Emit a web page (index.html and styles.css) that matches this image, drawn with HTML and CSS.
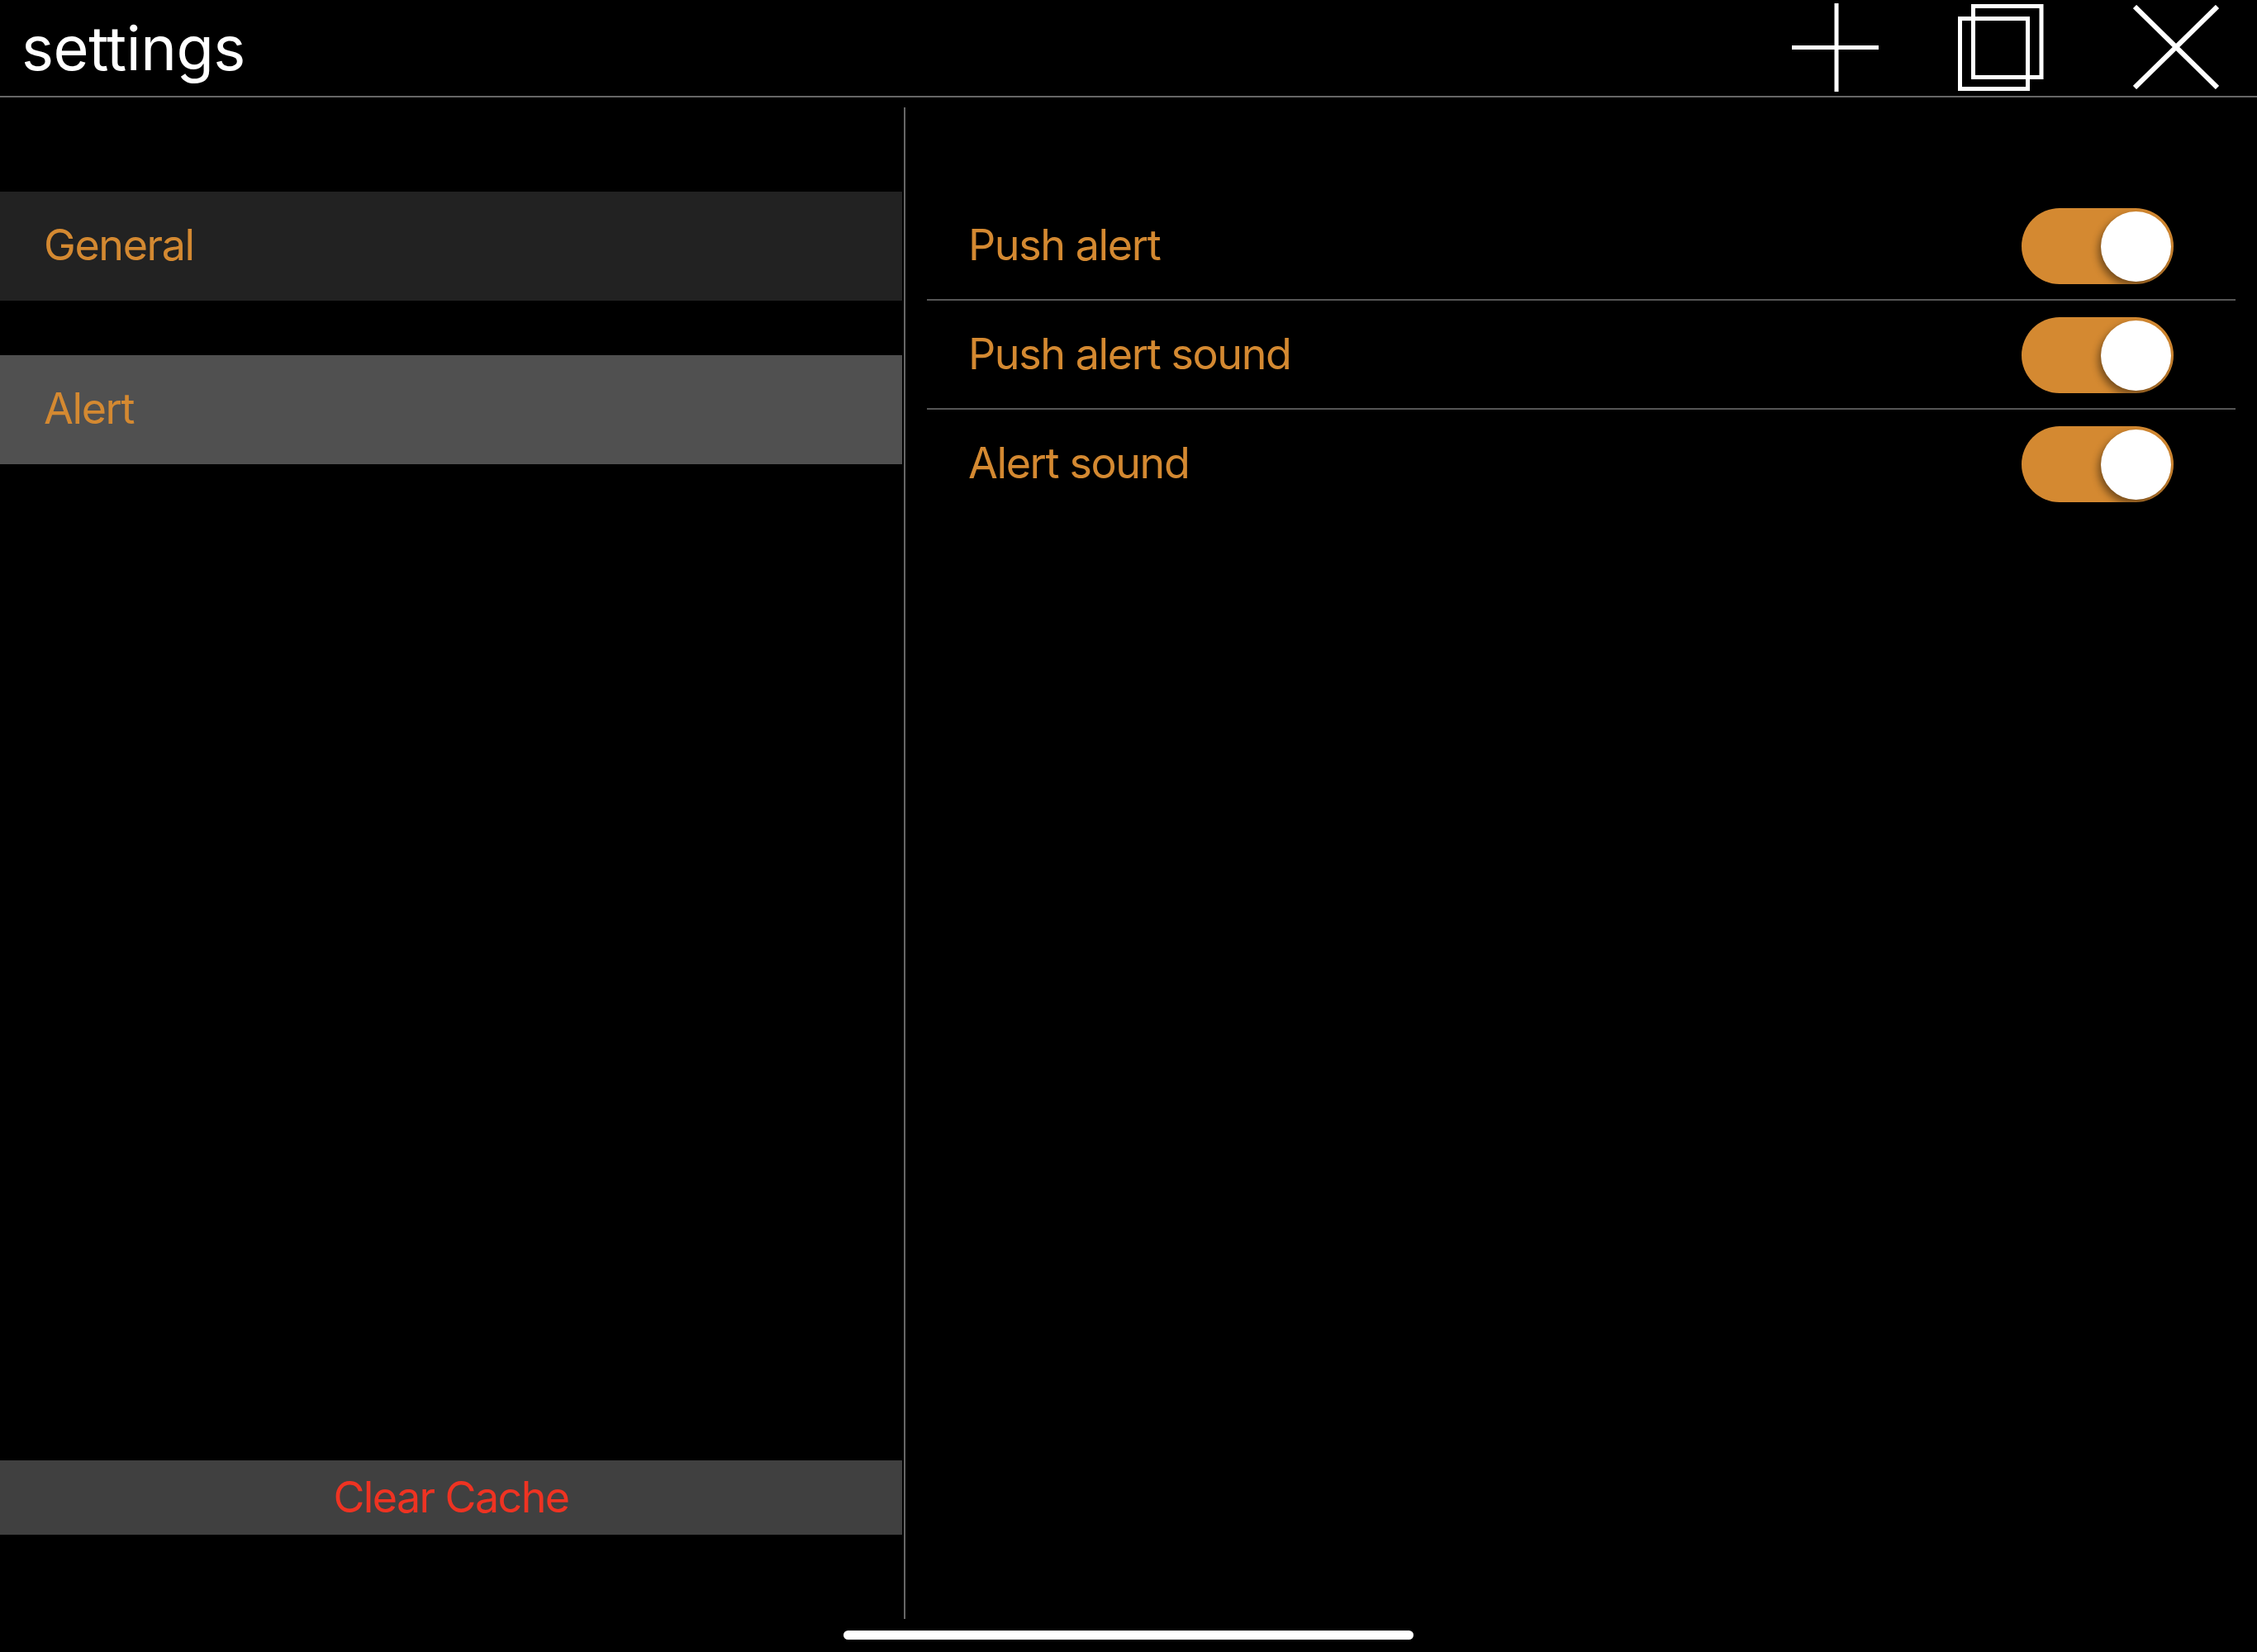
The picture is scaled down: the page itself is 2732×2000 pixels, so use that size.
FILE: index.html
```html
<!DOCTYPE html>
<html lang="en">
<head>
<meta charset="utf-8">
<title>settings</title>
<link rel="stylesheet" href="styles.css">
</head>
<body>
<div class="app">
  <header class="topbar">
    <h1 class="title">settings</h1>
    <div class="tools">
      <svg class="icon icon-plus" viewBox="0 0 105 108"><path d="M0 53.500H105M54 0V107"/></svg>
      <svg class="icon icon-copy" viewBox="0 0 104 106"><rect x="18.500" y="2.500" width="82.500" height="86"/><rect x="2.500" y="17.500" width="82" height="85"/></svg>
      <svg class="icon icon-close" viewBox="0 0 104 102"><path d="M2 2L102 100M102 2L2 100"/></svg>
    </div>
  </header>
  <main class="panes">
    <nav class="sidebar">
      <div class="nav-item nav-general">General</div>
      <div class="nav-item nav-alert">Alert</div>
      <button class="clear" type="button">Clear Cache</button>
    </nav>
    <section class="detail">
      <div class="row"><span class="label">Push alert</span><span class="toggle"><span class="knob"></span></span></div>
      <div class="row"><span class="label">Push alert sound</span><span class="toggle"><span class="knob"></span></span></div>
      <div class="row row-last"><span class="label">Alert sound</span><span class="toggle"><span class="knob"></span></span></div>
    </section>
  </main>
  <footer class="home"><span class="home-bar"></span></footer>
</div>
</body>
</html>
```
FILE: styles.css
```css
* { box-sizing: border-box; }
html, body { margin: 0; padding: 0; background: #000; }
.app {
  width: 2732px;
  height: 2000px;
  display: flex;
  flex-direction: column;
  font-family: Inter, "Liberation Sans", sans-serif;
  letter-spacing: -1.4px;
  color: #d48931;
  overflow: hidden;
}
.topbar {
  height: 118px;
  flex: none;
  display: flex;
  align-items: center;
  justify-content: space-between;
  border-bottom: 2px solid #666;
}
.title {
  margin: 0 0 0 26px;
  color: #fff;
  font-size: 74px;
  font-weight: 400;
  line-height: 116px;
  letter-spacing: -0.5px;
}
.tools { display: flex; align-items: flex-start; height: 116px; }
.icon { display: block; fill: none; stroke: #fff; stroke-width: 5; }
.icon-plus { width: 105px; height: 108px; margin-top: 4px; }
.icon-copy { width: 104px; height: 106px; margin: 5px 0 0 96px; }
.icon-close { width: 104px; height: 102px; margin: 6px 46px 0 108px; stroke-width: 6; }
.panes {
  height: 1830px;
  margin-top: 12px;
  flex: none;
  display: flex;
}
.sidebar {
  width: 1096px;
  flex: none;
  display: flex;
  flex-direction: column;
  padding: 102px 2px 102px 0;
  border-right: 2px solid #666;
}
.nav-item {
  height: 132px;
  flex: none;
  display: flex;
  align-items: center;
  padding: 0 0 3px 53px;
  font-size: 52px;
}
.nav-general { background: #222; }
.nav-alert { background: #505050; margin-top: 66px; }
.clear {
  margin-top: auto;
  height: 90px;
  border: 0;
  padding: 0 0 2px;
  background: #404040;
  color: #ee3322;
  font: inherit;
  font-size: 52px;
  letter-spacing: -1.6px;
}
.detail {
  flex: 1;
  padding: 102px 26px 0;
}
.row {
  height: 132px;
  display: flex;
  align-items: center;
  justify-content: space-between;
  padding: 0 75px 0 50px;
  border-bottom: 2px solid #555;
  font-size: 52px;
}
.row-last { height: 130px; border-bottom: 0; }
.label { margin-bottom: 2px; }
.toggle {
  width: 184px;
  height: 92px;
  border-radius: 46px;
  background: #d48931;
  display: flex;
  align-items: center;
  justify-content: flex-end;
  padding-right: 3px;
  margin-top: 2px;
}
.knob {
  width: 85px;
  height: 85px;
  border-radius: 50%;
  background: #fff;
  box-shadow: -3px 5px 10px rgba(0, 0, 0, 0.45);
}
.home {
  flex: 1;
  display: flex;
  justify-content: center;
  padding-top: 14px;
}
.home-bar {
  width: 690px;
  height: 11px;
  border-radius: 6px;
  background: #fff;
}
```
